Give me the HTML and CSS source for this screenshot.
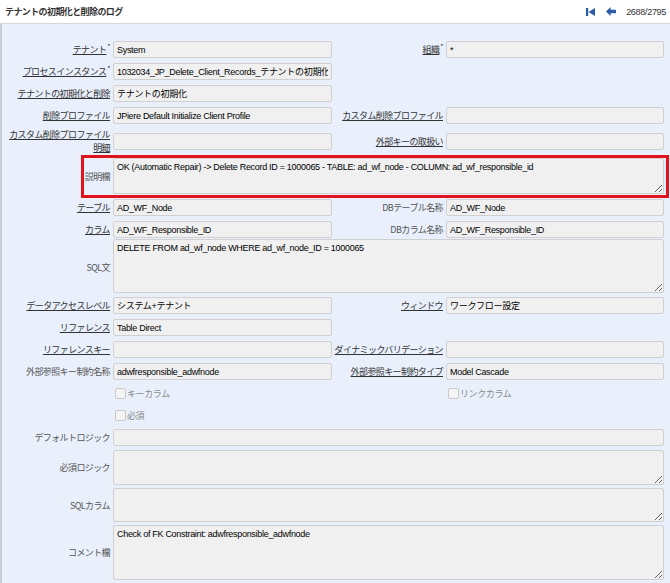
FILE: index.html
```
<!DOCTYPE html>
<html lang="ja">
<head>
	<meta charset="utf-8">
	<title>テナントの初期化と削除のログ</title>
	<link rel="stylesheet" href="styles.css">
</head>
<body>
<div class="bar">
	<span class="title">テナントの初期化と削除のログ</span>
	<div class="nav">
		<!-- first record -->
		<svg class="ico" width="9" height="8" viewBox="0 0 9 8"><rect x="0" y="0" width="2.2" height="8"/><path d="M9 0 L2.6 4 L9 8 Z"/></svg>
		<!-- previous record -->
		<svg class="ico" width="10" height="9" viewBox="0 0 10 9"><path d="M0 4.5 L4.6 0 L4.6 2.8 L10 2.8 L10 6.2 L4.6 6.2 L4.6 9 Z"/></svg>
		<span class="count">2688/2795</span>
	</div>
</div>

<div class="panel">
	<div class="form">
		<!-- header fields -->
		<label class="lbl link">テナント<sup>*</sup></label>
		<input class="inp" readonly value="System">
		<label class="lbl link">組織<sup>*</sup></label>
		<input class="inp" readonly value="*">

		<label class="lbl link">プロセスインスタンス<sup>*</sup></label>
		<input class="inp" readonly value="1032034_JP_Delete_Client_Records_テナントの初期化">
		<span></span><span></span>

		<label class="lbl link">テナントの初期化と削除</label>
		<input class="inp" readonly value="テナントの初期化">
		<span></span><span></span>

		<label class="lbl link">削除プロファイル</label>
		<input class="inp" readonly value="JPiere Default Initialize Client Profile">
		<label class="lbl link">カスタム削除プロファイル</label>
		<input class="inp" readonly value="">

		<label class="lbl link">カスタム削除プロファイル明細</label>
		<input class="inp" readonly value="">
		<label class="lbl link">外部キーの取扱い</label>
		<input class="inp" readonly value="">

		<!-- highlighted description -->
		<div class="hl">
			<label class="lbl">説明欄</label>
			<textarea class="inp area h36" readonly>OK (Automatic Repair) -> Delete Record ID = 1000065 - TABLE: ad_wf_node - COLUMN: ad_wf_responsible_id</textarea>
		</div>

		<label class="lbl link">テーブル</label>
		<input class="inp" readonly value="AD_WF_Node">
		<label class="lbl">DBテーブル名称</label>
		<input class="inp" readonly value="AD_WF_Node">

		<label class="lbl link">カラム</label>
		<input class="inp" readonly value="AD_WF_Responsible_ID">
		<label class="lbl">DBカラム名称</label>
		<input class="inp" readonly value="AD_WF_Responsible_ID">

		<label class="lbl">SQL文</label>
		<textarea class="inp area wide h54 sql" readonly>DELETE FROM ad_wf_node WHERE ad_wf_node_ID = 1000065</textarea>

		<label class="lbl link">データアクセスレベル</label>
		<input class="inp" readonly value="システム+テナント">
		<label class="lbl link">ウィンドウ</label>
		<input class="inp" readonly value="ワークフロー設定">

		<label class="lbl link">リファレンス</label>
		<input class="inp" readonly value="Table Direct">
		<span></span><span></span>

		<label class="lbl link">リファレンスキー</label>
		<input class="inp" readonly value="">
		<label class="lbl link">ダイナミックバリデーション</label>
		<input class="inp" readonly value="">

		<label class="lbl">外部参照キー制約名称</label>
		<input class="inp" readonly value="adwfresponsible_adwfnode">
		<label class="lbl link">外部参照キー制約タイプ</label>
		<input class="inp" readonly value="Model Cascade">

		<!-- checkboxes -->
		<span></span>
		<label class="chk"><span class="box"></span>キーカラム</label>
		<span></span>
		<label class="chk"><span class="box"></span>リンクカラム</label>

		<span></span>
		<label class="chk"><span class="box"></span>必須</label>
		<span></span><span></span>

		<label class="lbl">デフォルトロジック</label>
		<input class="inp wide" readonly value="">

		<label class="lbl">必須ロジック</label>
		<textarea class="inp area wide h35" readonly></textarea>

		<label class="lbl">SQLカラム</label>
		<textarea class="inp area wide h34" readonly></textarea>

		<label class="lbl">コメント欄</label>
		<textarea class="inp area wide h55" readonly>Check of FK Constraint: adwfresponsible_adwfnode</textarea>
	</div>
</div>
</body>
</html>
```

FILE: styles.css
```
body {
	margin: 0;
	background: #e9f0fc;
	font-family: "Liberation Sans", "Noto Sans CJK JP", sans-serif;
	color: #222;
}

.bar {
	height: 23px;
	background: #fff;
	border-bottom: 1px solid #d3d7dc;
	display: flex;
	align-items: center;
	justify-content: space-between;
	padding: 0 4px 0 5px;
}

.title {
	font: bold 9px "Noto Sans CJK JP", sans-serif;
	letter-spacing: -0.6px;
	color: #333;
}

.nav {
	display: flex;
	align-items: center;
	gap: 11px;
}

.ico {
	fill: #2b5aa6;
}

.count {
	font-size: 9px;
	letter-spacing: -0.3px;
	color: #333;
	margin-left: -1px;
}

.panel {
	border-left: 2px solid #c9cdd3;
	padding-top: 16px;
	height: 543px;
}

.form {
	display: grid;
	grid-template-columns: 111px 219px 114px 218px;
	row-gap: 3px;
	align-items: center;
}

.lbl {
	text-align: right;
	padding-right: 3px;
	font: 9px/13px "Noto Sans CJK JP", sans-serif;
	letter-spacing: -0.6px;
	color: #555;
}

.link {
	color: #333;
	text-decoration: underline;
}

.lbl sup {
	font-size: 7px;
	line-height: 0;
	vertical-align: 4px;
	text-decoration: none;
	display: inline-block;
	margin-left: 1px;
}

.inp {
	box-sizing: border-box;
	width: 100%;
	height: 17px;
	margin: 1px 0;
	border: 1px solid #d0d0d0;
	border-radius: 2px;
	background: #f0f0f0;
	padding: 0 3px;
	font: 9px "Liberation Sans", "Noto Sans CJK JP", sans-serif;
	letter-spacing: -0.3px;
	color: #000;
	outline: none;
}

.area {
	padding: 2px 3px;
	margin: 0;
	resize: both;
	line-height: 12px;
}

.wide {
	grid-column: 2 / -1;
}

/* the SQL row sits tight under the column row */
.sql {
	margin-top: -3px;
}

.h34 { height: 34px; }
.h35 { height: 35px; }
.h36 { height: 36px; }
.h54 { height: 54px; }
.h55 { height: 55px; }

/* red highlight round the description row */
.hl {
	grid-column: 1 / -1;
	display: grid;
	grid-template-columns: 111px 1fr;
	align-items: center;
	position: relative;
	margin: 1px 0;
}

.hl::after {
	content: "";
	position: absolute;
	left: 79px;
	right: -5px;
	top: -3px;
	bottom: -4px;
	border: 3px solid #e3131d;
}

.chk {
	display: flex;
	align-items: center;
	height: 19px;
	font: 9px "Noto Sans CJK JP", sans-serif;
	letter-spacing: -0.4px;
	color: #8a8a8a;
	padding-left: 2px;
}

.box {
	width: 9px;
	height: 9px;
	border: 1px solid #c8c8c8;
	border-radius: 2px;
	background: #f4f4f4;
	margin-right: 1px;
}
```
